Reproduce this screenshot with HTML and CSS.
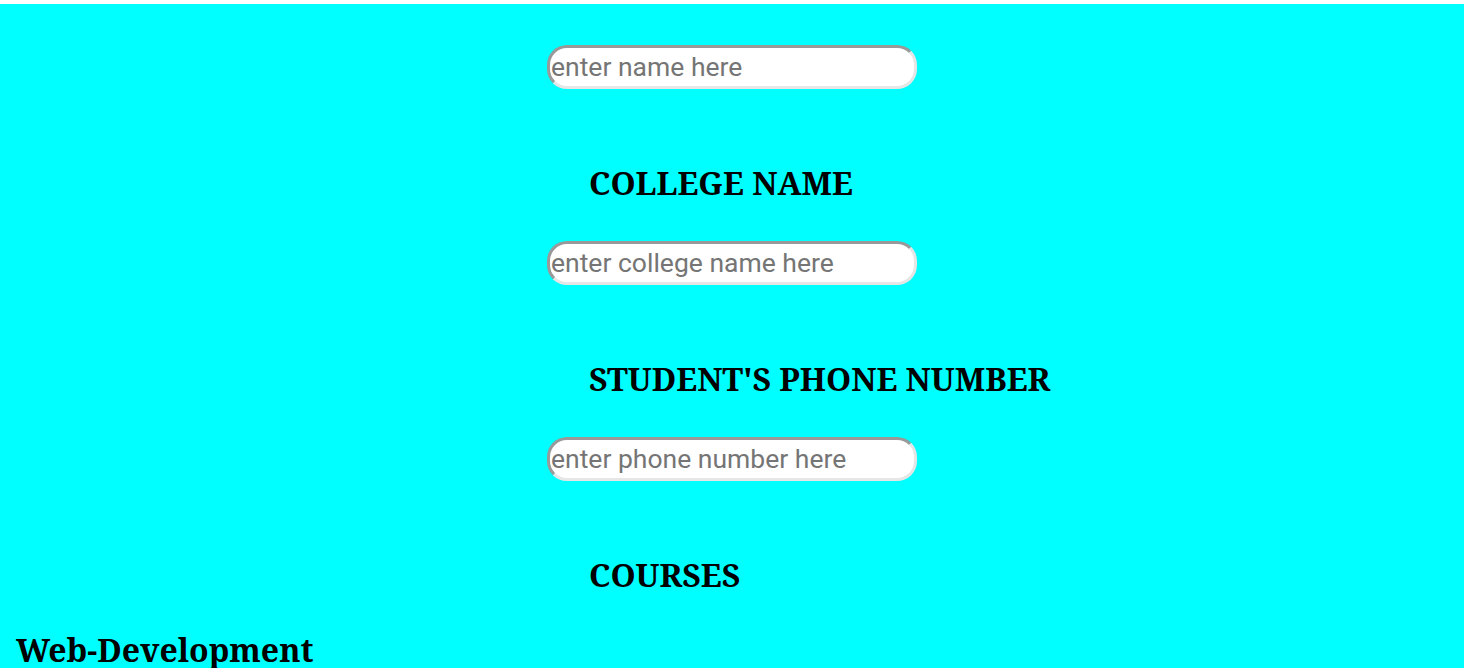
FILE: index.html
```html
<!DOCTYPE html>
<html lang="en">
<head>
    <meta charset="UTF-8">
    <meta name="viewport" content="width=device-width, initial-scale=1.0">
    <title>Student Registration</title>
    <link rel="stylesheet" href="styles.css">
</head>
<body>

    <div class="page">
        <form class="form">
            <input type="text" class="field" placeholder="enter name here">

            <h2 class="label">COLLEGE NAME</h2>
            <input type="text" class="field" placeholder="enter college name here">

            <h2 class="label">STUDENT'S PHONE NUMBER</h2>
            <input type="tel" class="field" placeholder="enter phone number here">

            <h2 class="label">COURSES</h2>
        </form>

        <div class="courses">
            <h2 class="course">Web-Development</h2>
        </div>
    </div>

</body>
</html>
```

FILE: styles.css
```css
html {
    background-color: white;
}
body {
    margin: 4px 0 0;
    background-color: #00ffff;
    font-family: "Noto Serif", serif;
    color: #000;
}
.page {
    padding-top: 41px;
}
.form {
    width: 370px;
    margin: 0 auto;
}
.field {
    display: block;
    box-sizing: border-box;
    width: 370px;
    height: 44px;
    margin: 0;
    padding: 0 0 2px 1px;
    border: 3px solid;
    border-color: #999 #e6e6e6 #e6e6e6 #999;
    border-radius: 20px;
    background-color: white;
    font-family: Roboto, sans-serif;
    font-size: 26.5px;
    color: #333;
    outline: none;
}
.field::placeholder {
    color: #757575;
}
.label {
    margin: 76px 0 40px;
    padding-left: 42px;
    font-size: 32px;
    line-height: 36px;
    white-space: nowrap;
}
.label:last-child {
    margin-bottom: 37px;
}
.courses {
    padding-left: 16px;
}
.course {
    margin: 0;
    font-size: 32px;
    line-height: 40px;
}
```
